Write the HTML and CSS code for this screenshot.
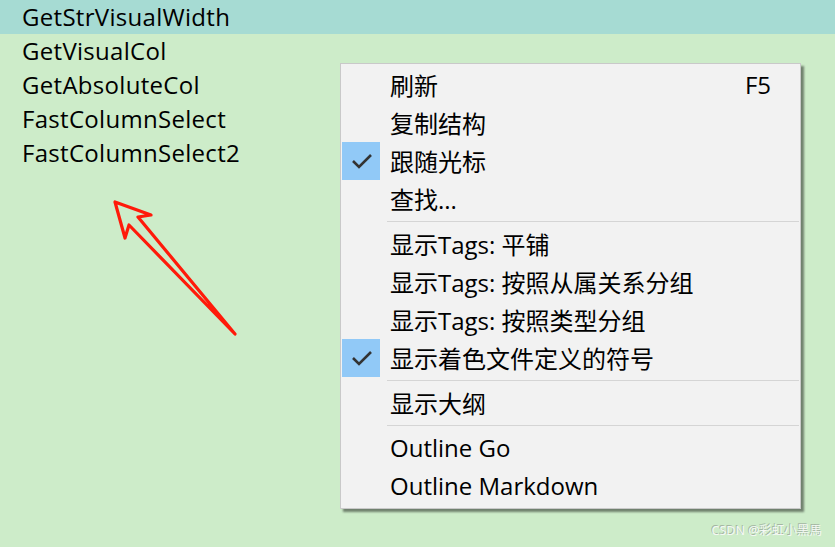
FILE: index.html
```html
<!DOCTYPE html>
<html>
<head>
<meta charset="utf-8">
<link rel="stylesheet" href="styles.css">
</head>
<body>
<div class="page">
  <ul class="symbols">
    <li class="sym selected">GetStrVisualWidth</li>
    <li class="sym">GetVisualCol</li>
    <li class="sym">GetAbsoluteCol</li>
    <li class="sym">FastColumnSelect</li>
    <li class="sym">FastColumnSelect2</li>
  </ul>

  <svg class="arrow" width="835" height="547" viewBox="0 0 835 547">
    <path d="M235 334 L138 217 L151 215 L115 202 L125 238 L129 225 Z" fill="none" stroke="#ff1a0a" stroke-width="3.2" stroke-linejoin="round" stroke-linecap="round"/>
  </svg>

  <div class="menu">
    <div class="item"><span class="check"></span><span class="label">刷新</span><span class="key">F5</span></div>
    <div class="item"><span class="check"></span><span class="label">复制结构</span><span class="key"></span></div>
    <div class="item"><span class="check on"><svg width="38" height="38" viewBox="0 0 38 38"><path d="M11 19 L17 25 L29 13" fill="none" stroke="#333" stroke-width="2.6"/></svg></span><span class="label">跟随光标</span><span class="key"></span></div>
    <div class="item"><span class="check"></span><span class="label">查找...</span><span class="key"></span></div>
    <div class="sep"></div>
    <div class="item"><span class="check"></span><span class="label">显示Tags: 平铺</span><span class="key"></span></div>
    <div class="item"><span class="check"></span><span class="label">显示Tags: 按照从属关系分组</span><span class="key"></span></div>
    <div class="item"><span class="check"></span><span class="label">显示Tags: 按照类型分组</span><span class="key"></span></div>
    <div class="item"><span class="check on"><svg width="38" height="38" viewBox="0 0 38 38"><path d="M11 19 L17 25 L29 13" fill="none" stroke="#333" stroke-width="2.6"/></svg></span><span class="label">显示着色文件定义的符号</span><span class="key"></span></div>
    <div class="sep"></div>
    <div class="item"><span class="check"></span><span class="label">显示大纲</span><span class="key"></span></div>
    <div class="sep"></div>
    <div class="item"><span class="check"></span><span class="label">Outline Go</span><span class="key"></span></div>
    <div class="item"><span class="check"></span><span class="label">Outline Markdown</span><span class="key"></span></div>
  </div>

  <div class="watermark">CSDN @彩虹小黑馬</div>
</div>
</body>
</html>
```
FILE: styles.css
```css
html, body {
  margin: 0;
  padding: 0;
}
body {
  background: #cdecc9;
  font-family: "Open Sans", "Noto Sans CJK SC", sans-serif;
  color: #000;
}
.page {
  position: relative;
  width: 835px;
  height: 547px;
  overflow: hidden;
}
.symbols {
  list-style: none;
  margin: 0;
  padding: 0;
  display: flex;
  flex-direction: column;
}
.sym {
  height: 34px;
  line-height: 34px;
  padding-left: 22px;
  font-size: 24px;
  letter-spacing: 0.3px;
}
.sym.selected {
  background: #a6dbd3;
}
.arrow {
  position: absolute;
  left: 0;
  top: 0;
}
.menu {
  position: absolute;
  left: 340px;
  top: 63px;
  width: 458px;
  height: 442px;
  padding: 2px 0 0 1px;
  background: #f2f2f2;
  border: 1px solid #c9c9c9;
  box-shadow: 3px 3px 2px rgba(0, 0, 0, 0.45);
  display: flex;
  flex-direction: column;
}
.item {
  display: flex;
  align-items: center;
  height: 38px;
  font-size: 24px;
}
.label, .key {
  padding-bottom: 2px;
}
.check {
  width: 38px;
  height: 38px;
  flex: none;
}
.check.on {
  background: #91c9f7;
}
.check svg {
  display: block;
}
.label {
  margin-left: 10px;
  flex: 1;
}
.key {
  margin-right: 29px;
}
.sep {
  height: 7px;
  margin-left: 45px;
  margin-right: 1px;
  display: flex;
  align-items: center;
}
.sep::before {
  content: "";
  flex: 1;
  height: 1px;
  background: #d5d5d5;
}
.watermark {
  position: absolute;
  right: 13px;
  bottom: 8px;
  font-size: 12.5px;
  color: #f4f8f3;
  text-shadow: -1px -1px 0 rgba(140, 150, 140, 0.65);
  font-family: "Noto Sans", "Noto Sans CJK SC", sans-serif;
}
```
